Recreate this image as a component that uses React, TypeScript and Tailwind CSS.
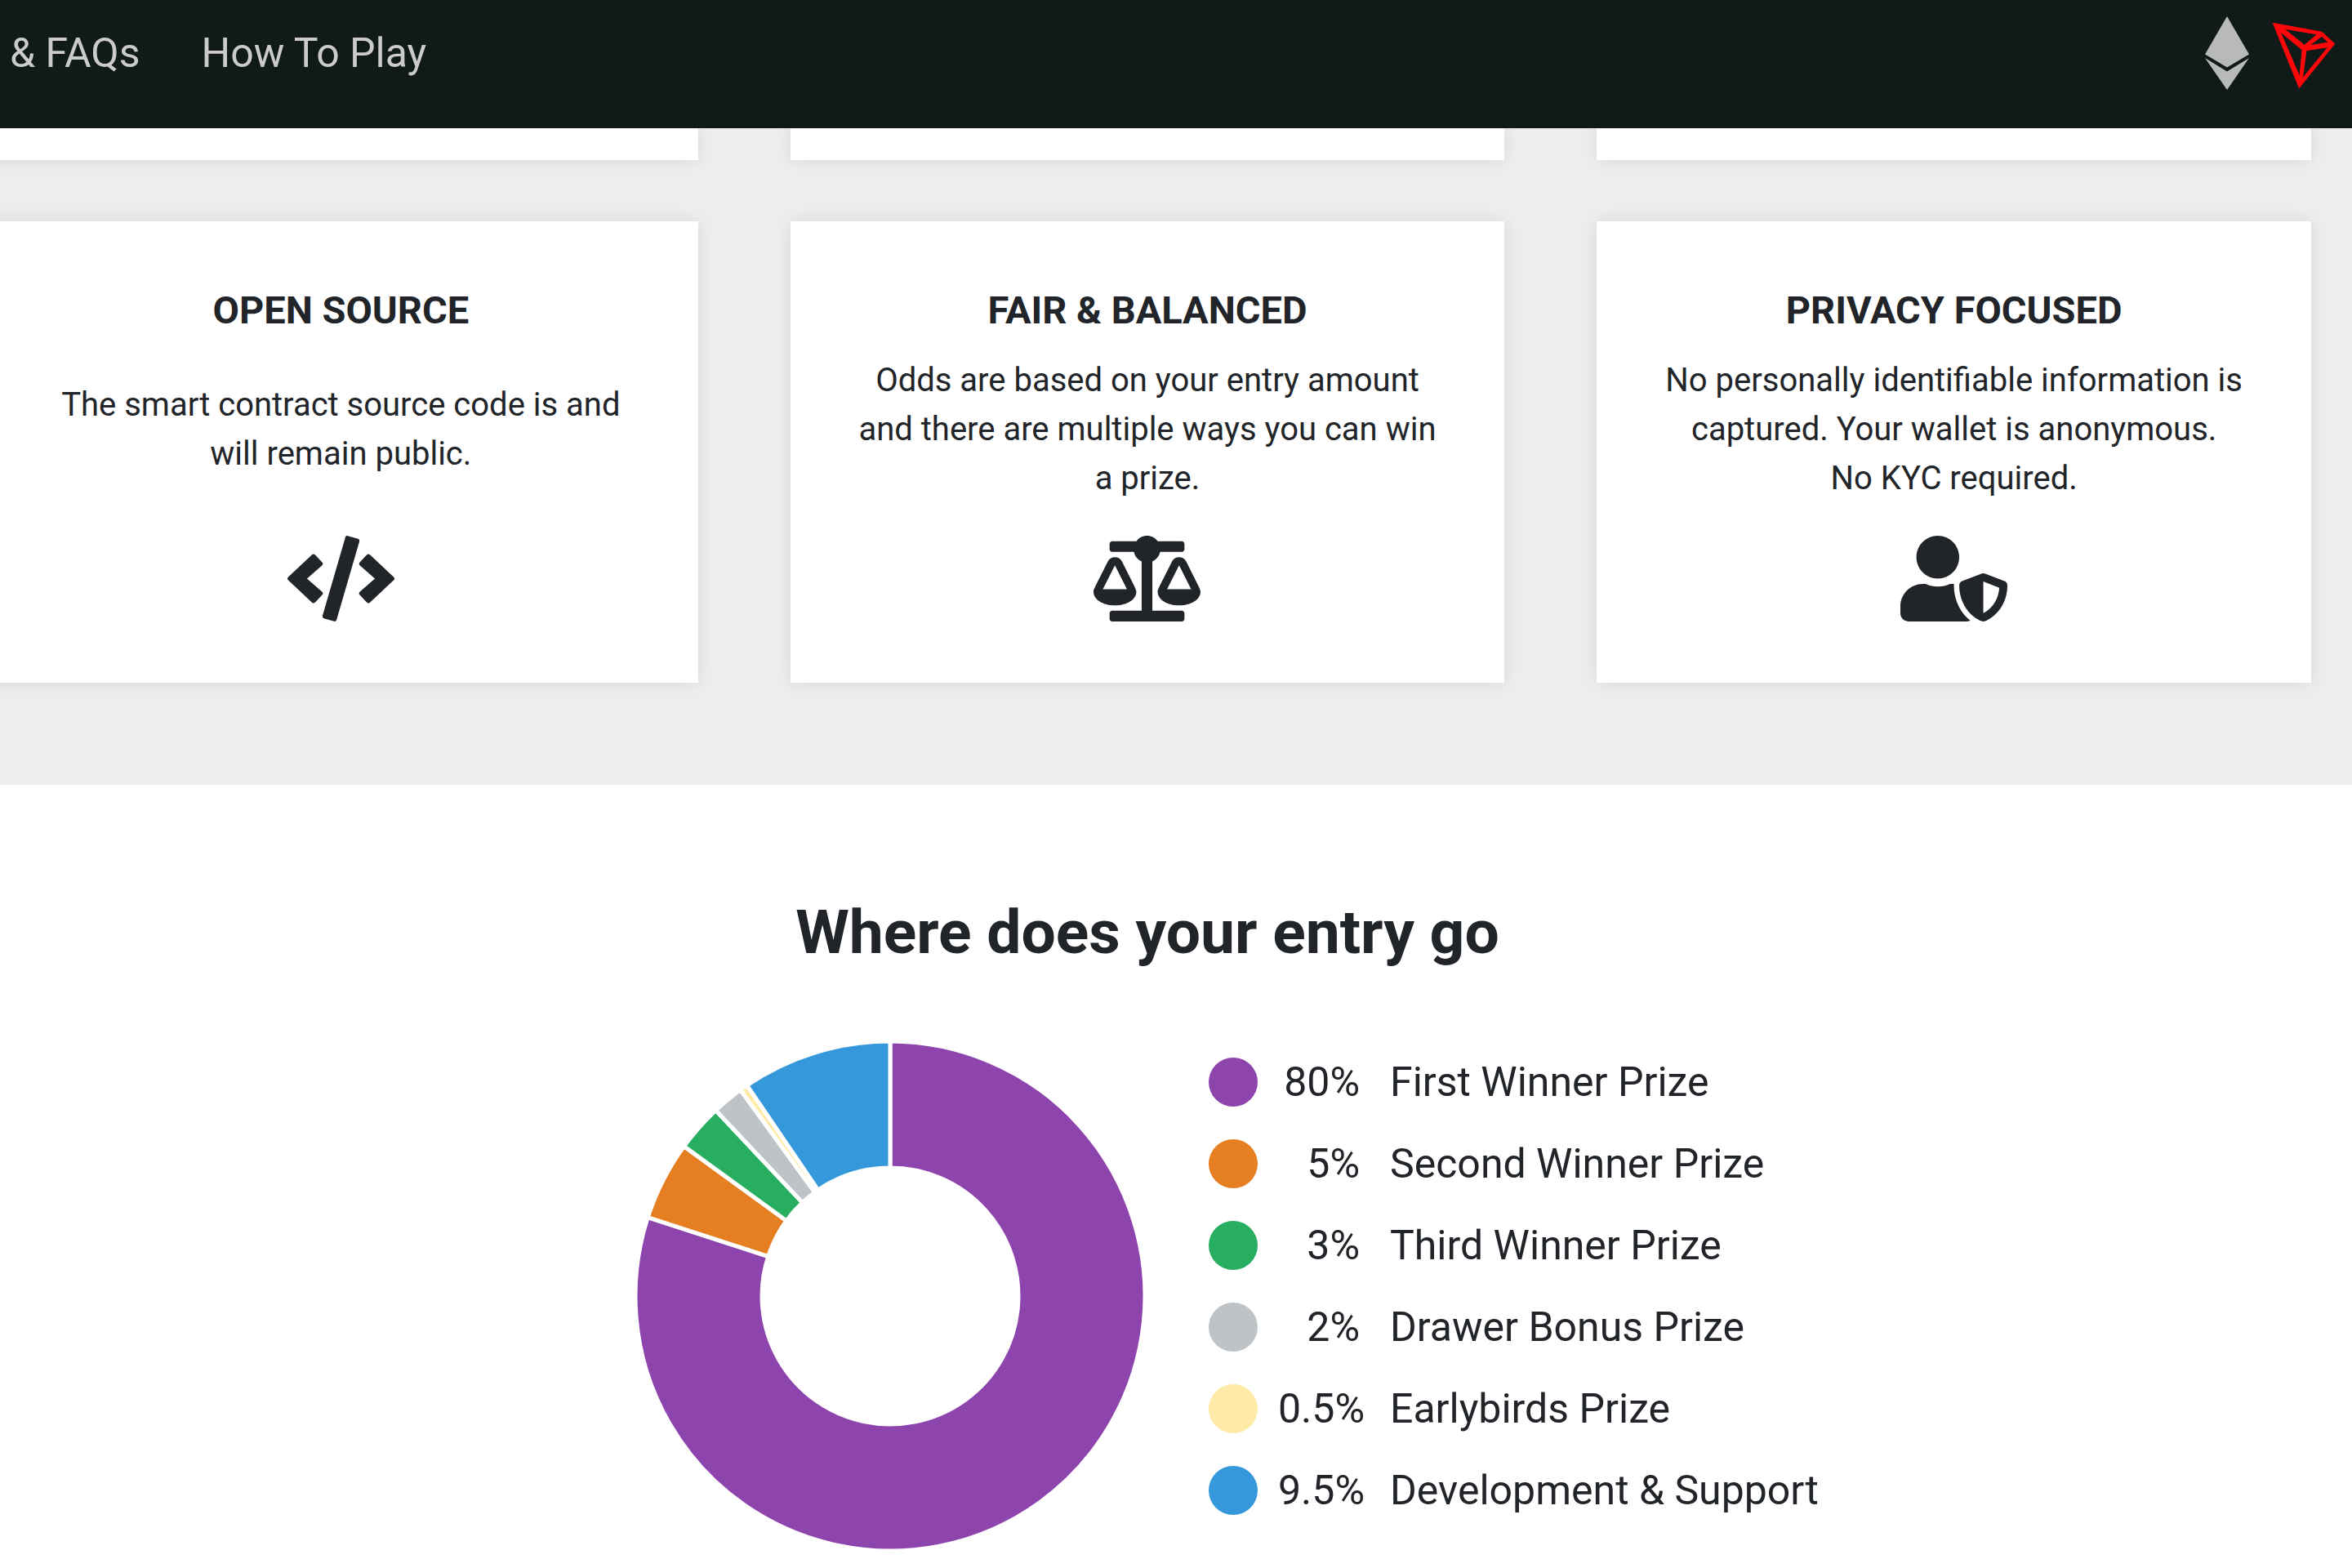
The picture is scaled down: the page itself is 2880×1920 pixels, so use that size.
import type { ReactNode } from "react";
import type { IconType } from "react-icons";
import { FaBalanceScale, FaCode, FaUserShield } from "react-icons/fa";

type Feature = { title: string; text: ReactNode; Icon: IconType };
type Share = { value: number; label: string; color: string };

const features: Feature[] = [
  {
    title: "OPEN SOURCE",
    text: "The smart contract source code is and will remain public.",
    Icon: FaCode,
  },
  {
    title: "FAIR & BALANCED",
    text: "Odds are based on your entry amount and there are multiple ways you can win a prize.",
    Icon: FaBalanceScale,
  },
  {
    title: "PRIVACY FOCUSED",
    text: (
      <>
        No personally identifiable information is captured. Your wallet is anonymous.
        <br />
        No KYC required.
      </>
    ),
    Icon: FaUserShield,
  },
];

const shares: Share[] = [
  { value: 80, label: "First Winner Prize", color: "#8e44ad" },
  { value: 5, label: "Second Winner Prize", color: "#e67e22" },
  { value: 3, label: "Third Winner Prize", color: "#27ae60" },
  { value: 2, label: "Drawer Bonus Prize", color: "#bdc3c7" },
  { value: 0.5, label: "Earlybirds Prize", color: "#ffeaa7" },
  { value: 9.5, label: "Development & Support", color: "#3498db" },
];

const OUTER = 312;
const INNER = 157;

function point(radius: number, percent: number) {
  const angle = (percent / 100) * Math.PI * 2;
  return `${radius * Math.sin(angle)} ${-radius * Math.cos(angle)}`;
}

function slicePath(from: number, to: number) {
  const large = to - from > 50 ? 1 : 0;
  return [
    `M${point(OUTER, from)}`,
    `A${OUTER} ${OUTER} 0 ${large} 1 ${point(OUTER, to)}`,
    `L${point(INNER, to)}`,
    `A${INNER} ${INNER} 0 ${large} 0 ${point(INNER, from)}`,
    "Z",
  ].join(" ");
}

function DonutChart() {
  let start = 0;
  return (
    <svg
      viewBox="-312 -312 624 624"
      className="w-[624px] max-w-full"
      role="img"
      aria-label="Distribution of each entry"
    >
      {shares.map(({ value, label, color }) => {
        const from = start;
        start += value;
        return (
          <path key={label} d={slicePath(from, start)} fill={color} stroke="#fff" strokeWidth="5" />
        );
      })}
    </svg>
  );
}

function EthereumLogo() {
  return (
    <svg viewBox="0 0 54 90" className="h-[90px] w-[54px]" fill="#b8bab9" aria-hidden="true">
      <path d="M27 0 0 46.500 27 62.500 54 46.500Z" />
      <path d="M0 51 27 67.500 54 51 27 90Z" />
    </svg>
  );
}

function TronLogo() {
  return (
    <svg viewBox="0 0 270 270" className="size-[90px]" fill="#ff060a" aria-hidden="true">
      <path
        fillRule="evenodd"
        stroke="#ff060a"
        strokeWidth="3"
        strokeLinejoin="bevel"
        d="M22 25 202 58 248 101 118 263Z M62 45 185 66 137 106Z M201 73 226 96 154 108Z M144 125 224 113 130 228Z M48 56 129 123 120 222Z"
      />
    </svg>
  );
}

function Header() {
  return (
    <header className="flex items-center justify-between bg-[#101a18] pt-5 pr-3.5 pb-[47px] pl-3">
      <nav className="flex gap-[75px] text-[50px] leading-[75px] text-[#cbcbcb]">
        <a href="#faqs">&amp; FAQs</a>
        <a href="#how-to-play">How To Play</a>
      </nav>
      <div className="flex items-center gap-[22px]">
        <a href="#ethereum" aria-label="Ethereum">
          <EthereumLogo />
        </a>
        <a href="#tron" aria-label="Tron">
          <TronLogo />
        </a>
      </div>
    </header>
  );
}

function FeatureCard({ title, text, Icon }: Feature) {
  return (
    <article className="flex flex-col items-center bg-white px-[75px] pt-[81px] pb-[75px] text-center shadow-[0_0_20px_rgba(0,0,0,0.09)]">
      <h3 className="text-[47px] leading-[56px] font-bold">{title}</h3>
      <div className="mt-7 flex min-h-[180px] items-center">
        <p className="text-[40px] leading-[60px]">{text}</p>
      </div>
      <Icon className="mt-10 h-[105px] w-[131px]" aria-hidden="true" />
    </article>
  );
}

function Features() {
  return (
    <section className="bg-[#ededed] px-[50px] pb-[125px]">
      <div className="mb-[75px] grid grid-cols-3 gap-[113px]" aria-hidden="true">
        {features.map(({ title }) => (
          <div key={title} className="bg-white pb-[39px] shadow-[0_0_20px_rgba(0,0,0,0.09)]" />
        ))}
      </div>
      <div className="grid grid-cols-3 gap-[113px]">
        {features.map((feature) => (
          <FeatureCard key={feature.title} {...feature} />
        ))}
      </div>
    </section>
  );
}

function EntryBreakdown() {
  return (
    <section className="bg-white pt-[135px]">
      <h2 className="text-center text-[75px] leading-[90px] font-bold">Where does your entry go</h2>
      <div className="mt-[89px] grid grid-cols-2 items-start">
        <div className="flex justify-end pr-[3px]">
          <DonutChart />
        </div>
        <ul className="pl-[75px] text-[50px] leading-[75px]">
          {shares.map(({ value, label, color }) => (
            <li key={label} className="flex h-[100px] items-center whitespace-nowrap">
              <span className="size-[60px] rounded-full" style={{ backgroundColor: color }} />
              <span className="ml-[25px] w-[100px] text-right">{value}%</span>
              <span className="ml-[37px]">{label}</span>
            </li>
          ))}
        </ul>
      </div>
    </section>
  );
}

export default function App() {
  return (
    <div className="h-screen overflow-hidden bg-white font-[Roboto,sans-serif] text-[#212529]">
      <div className="relative z-10">
        <Header />
      </div>
      <main className="-ml-[70px]">
        <Features />
        <EntryBreakdown />
      </main>
    </div>
  );
}
